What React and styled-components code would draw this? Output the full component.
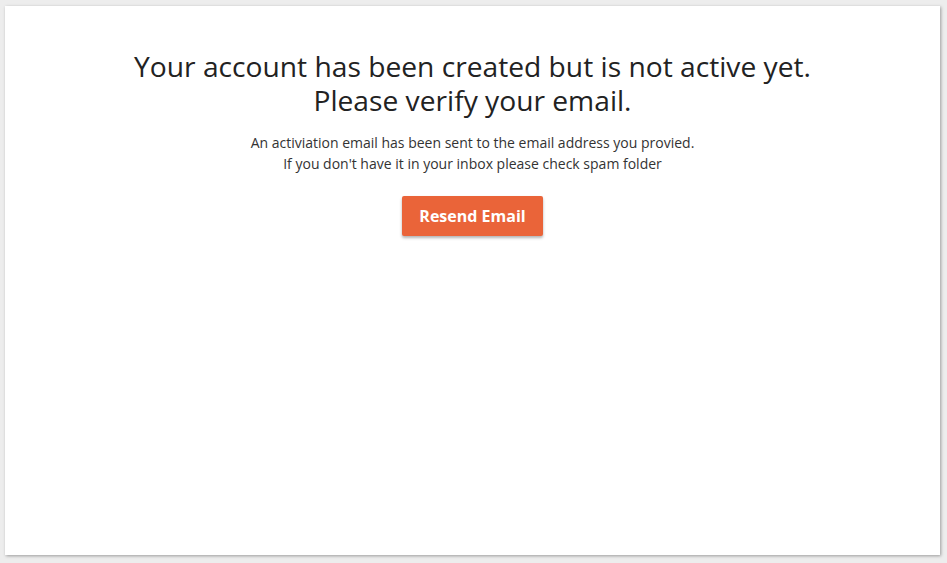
import React from "react";
import styled, { createGlobalStyle } from "styled-components";

const GlobalStyle = createGlobalStyle`
  html, body {
    margin: 0;
    padding: 0;
    background: #ededed;
    font-family: "Open Sans", "Noto Sans", sans-serif;
  }
`;

const Page = styled.div`
  width: 947px;
  height: 563px;
  padding: 6px 7px 8px 5px;
  box-sizing: border-box;
`;

const Card = styled.div`
  width: 100%;
  height: 100%;
  background: #fff;
  box-shadow: 1px 1px 3px rgba(0, 0, 0, 0.35);
  display: flex;
  flex-direction: column;
  align-items: center;
  padding-top: 43px;
  box-sizing: border-box;
`;

const Title = styled.h1`
  margin: 0;
  font-size: 28.2px;
  font-weight: 400;
  line-height: 34px;
  color: #222;
  text-align: center;
`;

const Note = styled.p`
  margin: 15px 0 0;
  font-size: 14px;
  line-height: 21px;
  color: #333;
  text-align: center;
`;

const ResendButton = styled.button`
  margin-top: 22px;
  width: 141px;
  height: 40px;
  border: none;
  border-radius: 2px;
  background: #ea6439;
  color: #fff;
  font-family: "Open Sans", sans-serif;
  font-size: 16px;
  font-weight: 700;
  box-shadow: 0 2px 3px rgba(0, 0, 0, 0.3);
  cursor: pointer;
`;

const App = () => {
  return (
    <Page>
      <GlobalStyle />
      <Card>
        <Title>
          Your account has been created but is not active yet.
          <br />
          Please verify your email.
        </Title>
        <Note>
          An activiation email has been sent to the email address you provied.
          <br />
          If you don't have it in your inbox please check spam folder
        </Note>
        <ResendButton>Resend Email</ResendButton>
      </Card>
    </Page>
  );
};

export default App;
